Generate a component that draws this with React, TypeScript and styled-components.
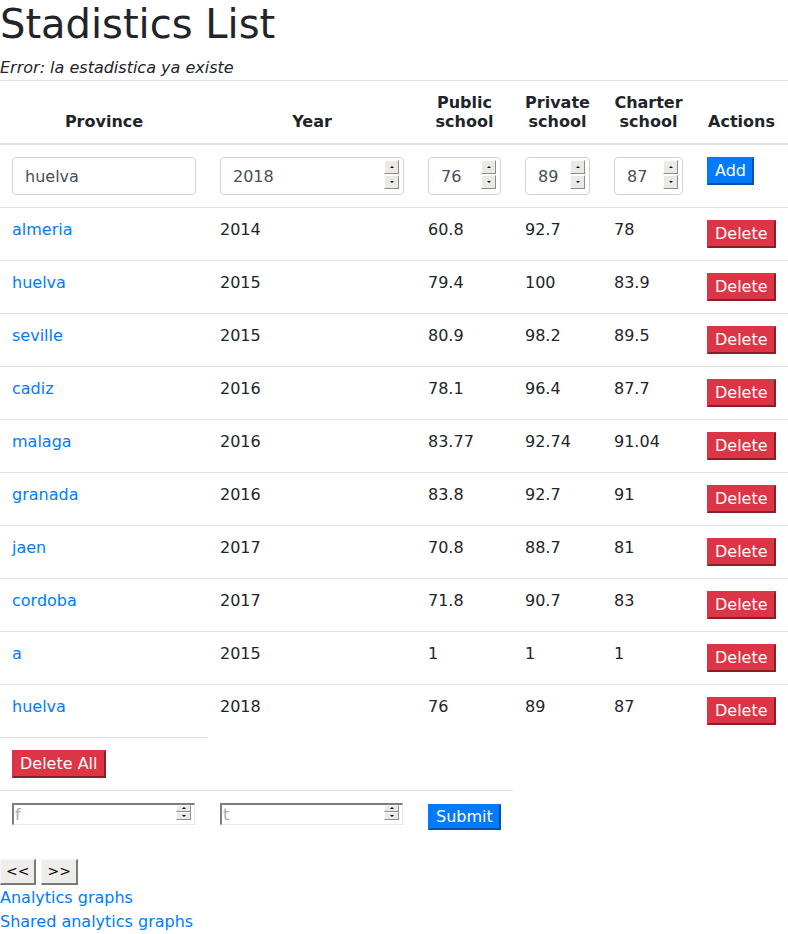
import React from "react";
import styled, { createGlobalStyle } from "styled-components";

const Global = createGlobalStyle`
  html, body { margin: 0; padding: 0; overflow: hidden; }
  body {
    font-family: "DejaVu Sans", "Noto Sans", sans-serif;
    font-size: 16px;
    line-height: 1.5;
    color: #212529;
    background: #fff;
  }
`;

const Page = styled.div`
  display: flex;
  flex-direction: column;
`;

const Title = styled.h1`
  margin: 0 0 8px;
  font-size: 40px;
  font-weight: 500;
  line-height: 48px;
`;

const ErrorText = styled.p`
  margin: 0;
  font-style: italic;
  line-height: 24px;
`;

const Table = styled.table`
  width: 100%;
  border-collapse: collapse;
  table-layout: fixed;
  margin-bottom: 16px;
  line-height: normal;
`;

const Col = styled.col<{ $w: number }>`
  width: ${(p) => p.$w}px;
`;

const Th = styled.th`
  padding: 12px;
  text-align: center;
  vertical-align: bottom;
  font-weight: bold;
  border-top: 1px solid #dee2e6;
  border-bottom: 2px solid #dee2e6;
`;

const Td = styled.td`
  padding: 12px;
  vertical-align: top;
  text-align: left;
  border-top: 1px solid #dee2e6;
`;

const Link = styled.a`
  color: #007bff;
  text-decoration: none;
`;

const noNativeSpin = `
  -moz-appearance: textfield;
  &::-webkit-inner-spin-button,
  &::-webkit-outer-spin-button {
    -webkit-appearance: none;
    margin: 0;
  }
`;

const FormInput = styled.input`
  display: block;
  width: 100%;
  box-sizing: border-box;
  height: 38px;
  margin: 0;
  padding: 6px 12px;
  font-family: inherit;
  font-size: 16px;
  line-height: 1.5;
  color: #495057;
  background: #fff;
  border: 1px solid #ced4da;
  border-radius: 4px;
  ${noNativeSpin}
`;

const RangeInput = styled.input`
  display: block;
  width: 183px;
  box-sizing: border-box;
  height: 22px;
  margin: 0;
  padding: 0 1px;
  font-family: inherit;
  font-size: 16px;
  line-height: 18px;
  color: #212529;
  background: #fff;
  border-style: solid;
  border-width: 2px 1px 1px 2px;
  border-color: #7d7d7d #e6e6e6 #e6e6e6 #7d7d7d;
  border-radius: 0;
  &::placeholder { color: #a9a9a9; }
  ${noNativeSpin}
`;

const SpinField = styled.div<{ $inline?: boolean }>`
  position: relative;
  width: ${(p) => (p.$inline ? "183px" : "100%")};
`;

const Spinner = styled.span<{ $small?: boolean }>`
  position: absolute;
  top: ${(p) => (p.$small ? "2px" : "3px")};
  right: ${(p) => (p.$small ? "4px" : "5px")};
  width: 15px;
  height: ${(p) => (p.$small ? "15px" : "29px")};
  display: flex;
  flex-direction: column;
  gap: ${(p) => (p.$small ? "0" : "1px")};
`;

const SpinStep = styled.span`
  flex: 1;
  box-sizing: border-box;
  display: flex;
  align-items: center;
  justify-content: center;
  background: #ebe9e5;
  border-style: solid;
  border-width: 1px;
  border-color: #fdfdfd #8e8c88 #8e8c88 #fdfdfd;
`;

const Arrow = styled.span<{ $down?: boolean }>`
  width: 0;
  height: 0;
  border-left: 2px solid transparent;
  border-right: 2px solid transparent;
  ${(p) =>
    p.$down
      ? "border-top: 2px solid #111;"
      : "border-bottom: 2px solid #111;"}
`;

const ColorButton = styled.button<{ $tone: "primary" | "danger"; $short?: boolean }>`
  margin: ${(p) => (p.$short ? "1px 0" : "0")};
  padding: 2px 6px;
  font-family: inherit;
  font-size: 16px;
  line-height: ${(p) => (p.$short ? "18px" : "20px")};
  color: #fff;
  background: ${(p) => (p.$tone === "primary" ? "#007bff" : "#dc3545")};
  border: 2px outset ${(p) => (p.$tone === "primary" ? "#007bff" : "#dc3545")};
  border-radius: 0;
  cursor: pointer;
`;

const Pager = styled.div`
  display: flex;
  gap: 5px;
  margin-bottom: 1px;
`;

const PagerButton = styled.button`
  margin: 0;
  padding: 1px 5px;
  font-family: inherit;
  font-size: 14px;
  line-height: 21px;
  color: #000;
  background: #efedea;
  border-style: solid;
  border-width: 1px 2px 2px 1px;
  border-color: #f7f6f4 #7a7a7a #7a7a7a #f7f6f4;
  border-radius: 0;
`;

const FooterLink = styled.a`
  display: block;
  color: #007bff;
  text-decoration: none;
  line-height: 24px;
`;

function SpinButtons({ small }: { small?: boolean }) {
  return (
    <Spinner $small={small} aria-hidden>
      <SpinStep><Arrow /></SpinStep>
      <SpinStep><Arrow $down /></SpinStep>
    </Spinner>
  );
}

function NumberField({ value }: { value: number }) {
  return (
    <SpinField>
      <FormInput type="number" defaultValue={value} />
      <SpinButtons />
    </SpinField>
  );
}

function RangeField({ placeholder }: { placeholder: string }) {
  return (
    <SpinField $inline>
      <RangeInput type="number" placeholder={placeholder} />
      <SpinButtons small />
    </SpinField>
  );
}

const rows = [
  ["almeria", "2014", "60.8", "92.7", "78"],
  ["huelva", "2015", "79.4", "100", "83.9"],
  ["seville", "2015", "80.9", "98.2", "89.5"],
  ["cadiz", "2016", "78.1", "96.4", "87.7"],
  ["malaga", "2016", "83.77", "92.74", "91.04"],
  ["granada", "2016", "83.8", "92.7", "91"],
  ["jaen", "2017", "70.8", "88.7", "81"],
  ["cordoba", "2017", "71.8", "90.7", "83"],
  ["a", "2015", "1", "1", "1"],
  ["huelva", "2018", "76", "89", "87"],
];

export default function App() {
  return (
    <Page>
      <Global />
      <Title>Stadistics List</Title>
      <ErrorText>Error: la estadistica ya existe</ErrorText>
      <Table>
        <colgroup>
          <Col $w={208} />
          <Col $w={208} />
          <Col $w={97} />
          <Col $w={89} />
          <Col $w={93} />
          <Col $w={93} />
        </colgroup>
        <thead>
          <tr>
            <Th>Province</Th>
            <Th>Year</Th>
            <Th>Public school</Th>
            <Th>Private school</Th>
            <Th>Charter school</Th>
            <Th>Actions</Th>
          </tr>
        </thead>
        <tbody>
          <tr>
            <Td><FormInput type="text" defaultValue="huelva" /></Td>
            <Td><NumberField value={2018} /></Td>
            <Td><NumberField value={76} /></Td>
            <Td><NumberField value={89} /></Td>
            <Td><NumberField value={87} /></Td>
            <Td><ColorButton $tone="primary">Add</ColorButton></Td>
          </tr>
          {rows.map((r, i) => (
            <tr key={i}>
              <Td><Link href="#">{r[0]}</Link></Td>
              <Td>{r[1]}</Td>
              <Td>{r[2]}</Td>
              <Td>{r[3]}</Td>
              <Td>{r[4]}</Td>
              <Td><ColorButton $tone="danger">Delete</ColorButton></Td>
            </tr>
          ))}
          <tr>
            <Td><ColorButton $tone="danger">Delete All</ColorButton></Td>
          </tr>
          <tr>
            <Td><RangeField placeholder="f" /></Td>
            <Td><RangeField placeholder="t" /></Td>
            <Td><ColorButton $tone="primary" $short>Submit</ColorButton></Td>
          </tr>
        </tbody>
      </Table>
      <Pager>
        <PagerButton>&lt;&lt;</PagerButton>
        <PagerButton>&gt;&gt;</PagerButton>
      </Pager>
      <FooterLink href="#">Analytics graphs</FooterLink>
      <FooterLink href="#">Shared analytics graphs</FooterLink>
    </Page>
  );
}
